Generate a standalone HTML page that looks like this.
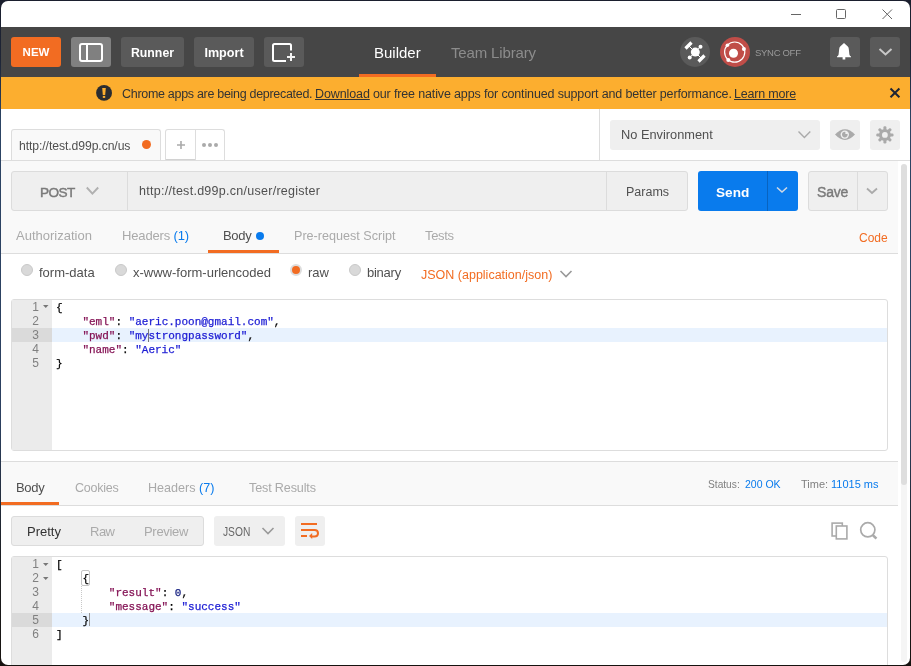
<!DOCTYPE html>
<html><head><meta charset="utf-8">
<style>
*{box-sizing:border-box;margin:0;padding:0}
html,body{width:911px;height:666px;overflow:hidden;background:linear-gradient(#1b1f2e 0,#1e2536 60px,#2c4464 120px,#2c4060 420px,#1c1e22 560px,#16120f 666px);font-family:"Liberation Sans",sans-serif}
.a{position:absolute}
#win{position:absolute;left:0;top:0;width:911px;height:666px;clip-path:inset(1px round 7px);background:#fff;-webkit-font-smoothing:antialiased;will-change:transform}
.t{position:absolute;white-space:pre;line-height:1}
.btn{position:absolute;border-radius:3px;background:#5a5a5a}
.hl{position:absolute;background:#dcdcdc}
.mono{font-family:"Liberation Mono",monospace;font-size:11px;line-height:14px;white-space:pre;position:absolute;-webkit-text-stroke:0.25px currentColor}
.k{color:#851456}.s{color:#1c1cd4}.n{color:#152080}.p{color:#000}
.ln{position:absolute;font-family:"Liberation Sans",sans-serif;font-size:12px;line-height:14px;color:#808080;text-align:right;width:26px}
</style></head><body>
<div id="win">
  <!-- title bar (win coords offset by 1px) -->
  <div class="a" style="left:0px;top:0px;width:911px;height:26px;background:#fff"></div>
  <div class="a" style="left:791px;top:14px;width:10px;height:1px;background:#666"></div>
  <div class="a" style="left:836px;top:9px;width:10px;height:10px;border:1px solid #666;border-radius:1.5px"></div>
  <svg class="a" style="left:881px;top:8px" width="12" height="12" viewBox="0 0 12 12"><path d="M1.5 1.5L11 11M11 1.5L1.5 11" stroke="#666" stroke-width="1"/></svg>

  <!-- header -->
  <div class="a" style="left:0px;top:27px;width:911px;height:50px;background:#464646"></div>
  <div class="btn" style="left:11px;top:37px;width:50px;height:30px;background:#f26c22"></div>
  <div class="t" style="left:11px;top:47px;width:50px;text-align:center;color:#fff;font-weight:700;font-size:11.5px">NEW</div>
  <div class="btn" style="left:71px;top:37px;width:40px;height:30px;background:#808080"></div>
  <div class="a" style="left:79px;top:43px;width:24px;height:19px;border:2px solid #fff;border-radius:3px"></div>
  <div class="a" style="left:86px;top:44px;width:2px;height:17px;background:#fff"></div>
  <div class="btn" style="left:121px;top:37px;width:63px;height:30px"></div>
  <div class="t" style="left:121px;top:47px;width:63px;text-align:center;color:#fff;font-weight:700;font-size:12.3px">Runner</div>
  <div class="btn" style="left:194px;top:37px;width:60px;height:30px"></div>
  <div class="t" style="left:194px;top:47px;width:60px;text-align:center;color:#fff;font-weight:700;font-size:12.6px">Import</div>
  <div class="btn" style="left:264px;top:37px;width:40px;height:30px"></div>
  <svg class="a" style="left:264px;top:37px" width="40" height="30" viewBox="0 0 40 30"><path d="M27 13.5V8.5Q27 7 25.5 7H10.5Q9 7 9 8.5V22.5Q9 24 10.5 24H22" fill="none" stroke="#fff" stroke-width="2"/><path d="M27 16V24M23 20H31" stroke="#f4f4f4" stroke-width="2"/></svg>

  <div class="t" style="left:374px;top:45px;color:#fff;font-size:15px">Builder</div>
  <div class="a" style="left:359px;top:74px;width:77px;height:3px;background:#f26c22"></div>
  <div class="t" style="left:451px;top:45px;color:#8c8c8c;font-size:15px;letter-spacing:-0.15px">Team Library</div>

  <svg class="a" style="left:680px;top:37px" width="30" height="30" viewBox="0 0 30 30">
    <circle cx="15" cy="15" r="15" fill="#5a5a5a"/>
    <path d="M9 9L21 21M20.5 9.7L9.7 20.5" stroke="#fff" stroke-width="1"/>
    <circle cx="15.3" cy="15.1" r="4.5" fill="#fff"/>
    <circle cx="20.5" cy="9.7" r="2" fill="#fff"/>
    <circle cx="9.7" cy="20.5" r="2" fill="#fff"/>
    <path d="M5.5 11.5L11.5 5.5M18.5 24.5L24.5 18.5" stroke="#fff" stroke-width="3.2"/>
  </svg>
  <svg class="a" style="left:720px;top:37px" width="30" height="30" viewBox="0 0 30 30">
    <circle cx="15" cy="15" r="15" fill="#c04d48"/>
    <circle cx="14.7" cy="15.1" r="10.1" fill="none" stroke="#fff" stroke-width="1.2"/>
    <circle cx="13.5" cy="16.2" r="4.5" fill="#fff"/>
    <circle cx="7.4" cy="8.3" r="1.8" fill="#fff"/>
    <circle cx="23.9" cy="11.9" r="2" fill="#fff"/>
    <circle cx="8.3" cy="23" r="2" fill="#fff"/>
  </svg>
  <div class="t" style="left:755px;top:48px;color:#9a9a9a;font-size:9.5px;letter-spacing:-0.3px">SYNC OFF</div>
  <div class="btn" style="left:830px;top:37px;width:30px;height:30px"></div>
  <svg class="a" style="left:830px;top:37px" width="30" height="30" viewBox="0 0 30 30"><path d="M14 6L10.2 9.6Q9.3 10.6 9.2 12L8.6 17.6Q8.3 19 7 19.6V20.2H21V19.6Q19.7 19 19.4 17.6L18.8 12Q18.7 10.6 17.8 9.6Z" fill="#fff"/><rect x="12.6" y="19.5" width="2.7" height="3" fill="#fff"/></svg>
  <div class="btn" style="left:870px;top:37px;width:30px;height:30px"></div>
  <svg class="a" style="left:870px;top:37px" width="30" height="30" viewBox="0 0 30 30"><path d="M9.5 12L15.5 17.5L21.5 12" fill="none" stroke="#c8c8c8" stroke-width="2"/></svg>

  <!-- banner -->
  <div class="a" style="left:0px;top:77px;width:911px;height:32px;background:#fcae2f"></div>
  <div class="t" style="left:122px;top:88px;color:#333;font-size:12.5px;letter-spacing:-0.3px">Chrome apps are being deprecated.</div>
  <div class="t" style="left:315px;top:88px;color:#333;font-size:12.5px;letter-spacing:-0.1px"><u>Download</u></div>
  <div class="t" style="left:373px;top:88px;color:#333;font-size:12.5px;letter-spacing:-0.145px">our free native apps for continued support and better performance.</div>
  <div class="t" style="left:734px;top:88px;color:#333;font-size:12.5px;letter-spacing:-0.2px"><u>Learn more</u></div>

  <svg class="a" style="left:94px;top:83px" width="20" height="20" viewBox="0 0 20 20"><circle cx="10.05" cy="9.9" r="7.95" fill="#2a2c30"/><path d="M8.2 5H11.8L11.2 12H8.8Z" fill="#fcae2f"/><rect x="8.8" y="12.9" width="2.4" height="2" fill="#fcae2f"/></svg>
  <svg class="a" style="left:884px;top:83px" width="20" height="20" viewBox="0 0 20 20"><path d="M6.5 5.5L15.4 14.3M15.4 5.5L6.5 14.3" stroke="#1e2433" stroke-width="2"/></svg>

  <!-- top tabs row -->
  <div class="a" style="left:0px;top:109px;width:911px;height:51px;background:#fff"></div>
  <div class="a" style="left:11px;top:129px;width:150px;height:32px;background:#f9f9f9;border:1px solid #ddd;border-bottom:none;border-radius:3px 3px 0 0"></div>
  <div class="t" style="left:19px;top:140px;color:#505050;font-size:12.2px;letter-spacing:-0.08px">http://test.d99p.cn/us</div>
  <div class="a" style="left:142px;top:140px;width:9px;height:9px;border-radius:50%;background:#f26c22"></div>
  <div class="a" style="left:165px;top:129px;width:60px;height:32px;background:#fff;border:1px solid #ddd;border-bottom:none;border-radius:3px 3px 0 0"></div>
  <div class="a" style="left:195px;top:130px;width:1px;height:30px;background:#ddd"></div>
  <div class="a" style="left:166px;top:159px;width:29px;height:1px;background:#d2d2d2"></div>
  <div class="a" style="left:599px;top:109px;width:1px;height:51px;background:#ddd"></div>
  <div class="a" style="left:610px;top:120px;width:210px;height:30px;background:#efefef;border-radius:3px"></div>
  <div class="t" style="left:621px;top:129px;color:#505050;font-size:12.8px">No Environment</div>
  <div class="btn" style="left:830px;top:120px;width:30px;height:30px;background:#efefef"></div>
  <div class="btn" style="left:870px;top:120px;width:30px;height:30px;background:#efefef"></div>
  <svg class="a" style="left:165px;top:130px" width="60" height="30" viewBox="0 0 60 30"><path d="M16 11V19M12 15H20" stroke="#aaa" stroke-width="1.6"/><circle cx="39" cy="15" r="2" fill="#aaa"/><circle cx="45" cy="15" r="2" fill="#aaa"/><circle cx="51" cy="15" r="2" fill="#aaa"/></svg>
  <svg class="a" style="left:795px;top:128px" width="18" height="14" viewBox="0 0 18 14"><path d="M3.5 3.5L9.4 9.5L15.3 3.5" fill="none" stroke="#aaa" stroke-width="1.4"/></svg>
  <svg class="a" style="left:830px;top:120px" width="30" height="30" viewBox="0 0 30 30"><path d="M5 14.6Q15 4 25 14.6Q15 25.2 5 14.6Z" fill="#aaa"/><circle cx="14.8" cy="14.6" r="4.2" fill="#efefef"/><circle cx="14.8" cy="14.6" r="2.8" fill="#aaa"/><path d="M15.4 14V11.3A3.3 3.3 0 0 1 18.2 14Z" fill="#efefef"/></svg>
  <svg class="a" style="left:870px;top:120px" width="30" height="30" viewBox="0 0 30 30"><g transform="translate(14.9 14.9)" fill="#aaa"><circle r="6"/><rect x="-1.5" y="-8.6" width="3" height="4" rx="1.2" transform="rotate(0)"/><rect x="-1.5" y="-8.6" width="3" height="4" rx="1.2" transform="rotate(45)"/><rect x="-1.5" y="-8.6" width="3" height="4" rx="1.2" transform="rotate(90)"/><rect x="-1.5" y="-8.6" width="3" height="4" rx="1.2" transform="rotate(135)"/><rect x="-1.5" y="-8.6" width="3" height="4" rx="1.2" transform="rotate(180)"/><rect x="-1.5" y="-8.6" width="3" height="4" rx="1.2" transform="rotate(225)"/><rect x="-1.5" y="-8.6" width="3" height="4" rx="1.2" transform="rotate(270)"/><rect x="-1.5" y="-8.6" width="3" height="4" rx="1.2" transform="rotate(315)"/></g><circle cx="14.9" cy="14.9" r="2.9" fill="#efefef"/></svg>

  <!-- request area -->
  <div class="a" style="left:0px;top:160px;width:911px;height:1px;background:#ddd"></div>
  <div class="a" style="left:0px;top:161px;width:898px;height:93px;background:#f9f9f9"></div>

  <!-- url bar -->
  <div class="a" style="left:11px;top:171px;width:677px;height:40px;background:#efefef;border:1px solid #dcdcdc;border-radius:3px"></div>
  <div class="a" style="left:127px;top:172px;width:1px;height:38px;background:#dcdcdc"></div>
  <div class="a" style="left:606px;top:172px;width:1px;height:38px;background:#dcdcdc"></div>
  <div class="t" style="left:40px;top:186px;color:#7a7a7a;font-weight:400;font-size:13.6px;letter-spacing:-0.6px;-webkit-text-stroke:0.45px #7a7a7a">POST</div>
  <svg class="a" style="left:85px;top:186px" width="15" height="10" viewBox="0 0 15 10"><path d="M1.8 1.5L7.4 7.6L13.2 1.5" fill="none" stroke="#b0b0b0" stroke-width="1.9"/></svg>
  <div class="t" style="left:139px;top:185px;color:#505050;font-size:12.5px;letter-spacing:0.27px">http://test.d99p.cn/user/register</div>
  <div class="t" style="left:626px;top:186px;color:#505050;font-size:12.5px">Params</div>
  <div class="btn" style="left:698px;top:171px;width:100px;height:40px;background:#097bed"></div>
  <div class="a" style="left:767px;top:171px;width:1px;height:40px;background:#0863c0"></div>
  <div class="t" style="left:716px;top:186px;color:#fff;font-weight:700;font-size:13.6px">Send</div>
  <svg class="a" style="left:775px;top:185px" width="14" height="10" viewBox="0 0 14 10"><path d="M2 2.5L7 7L12 2.5" fill="none" stroke="#cfd9e6" stroke-width="1.6"/></svg>
  <div class="a" style="left:808px;top:171px;width:80px;height:40px;background:#efefef;border:1px solid #dcdcdc;border-radius:3px"></div>
  <div class="a" style="left:857px;top:172px;width:1px;height:38px;background:#dcdcdc"></div>
  <div class="t" style="left:817px;top:185px;color:#7a7a7a;font-weight:400;font-size:14px;letter-spacing:-0.2px;-webkit-text-stroke:0.4px #7a7a7a">Save</div>
  <svg class="a" style="left:865px;top:186px" width="14" height="10" viewBox="0 0 14 10"><path d="M2 2.5L7 7L12 2.5" fill="none" stroke="#aaa" stroke-width="1.8"/></svg>

  <!-- request tabs -->
  <div class="t" style="left:16px;top:229px;color:#aaa;font-size:13px">Authorization</div>
  <div class="t" style="left:122px;top:229px;color:#aaa;font-size:13px;letter-spacing:-0.15px">Headers <span style="color:#097bed">(1)</span></div>
  <div class="t" style="left:223px;top:229px;color:#505050;font-size:13px;letter-spacing:-0.3px">Body</div>
  <div class="a" style="left:256px;top:232px;width:8px;height:8px;border-radius:50%;background:#097bed"></div>
  <div class="a" style="left:208px;top:250px;width:71px;height:3px;background:#f26c22"></div>
  <div class="t" style="left:294px;top:230px;color:#aaa;font-size:12.6px">Pre-request Script</div>
  <div class="t" style="left:425px;top:229px;color:#aaa;font-size:13px;letter-spacing:-0.35px">Tests</div>
  <div class="t" style="left:859px;top:232px;color:#f26c22;font-size:12px">Code</div>
  <div class="a" style="left:0px;top:253px;width:898px;height:1px;background:#ddd"></div>

  <!-- body type radios -->
  <div class="a" style="left:21px;top:264px;width:12px;height:12px;border-radius:50%;background:#d9d9d9;border:1px solid #c9c9c9"></div>
  <div class="t" style="left:39px;top:266px;color:#505050;font-size:13px">form-data</div>
  <div class="a" style="left:115px;top:264px;width:12px;height:12px;border-radius:50%;background:#d9d9d9;border:1px solid #c9c9c9"></div>
  <div class="t" style="left:133px;top:266px;color:#505050;font-size:13px">x-www-form-urlencoded</div>
  <div class="a" style="left:290px;top:264px;width:12px;height:12px;border-radius:50%;background:#f26c22;border:2px solid #ddd"></div>
  <div class="t" style="left:308px;top:266px;color:#505050;font-size:13px">raw</div>
  <div class="a" style="left:349px;top:264px;width:12px;height:12px;border-radius:50%;background:#d9d9d9;border:1px solid #c9c9c9"></div>
  <div class="t" style="left:367px;top:266px;color:#505050;font-size:13px;letter-spacing:-0.25px">binary</div>
  <div class="t" style="left:421px;top:269px;color:#f26c22;font-size:12.5px">JSON (application/json)</div>
  <svg class="a" style="left:559px;top:269px" width="14" height="10" viewBox="0 0 14 10"><path d="M1.5 2L7 7.5L12.5 2" fill="none" stroke="#999" stroke-width="1.6"/></svg>

  <!-- request editor -->
  <div class="a" style="left:11px;top:299px;width:877px;height:152px;border:1px solid #ddd;border-radius:3px;background:#fff"></div>
  <div class="a" style="left:12px;top:300px;width:40px;height:150px;background:#ebebeb"></div>
  <div class="a" style="left:12px;top:328px;width:40px;height:14px;background:#dadada"></div>
  <div class="a" style="left:52px;top:328px;width:835px;height:14px;background:#e8f2fe"></div>
  <div class="ln" style="left:13px;top:300px">1<br>2<br>3<br>4<br>5</div>
  <svg class="a" style="left:43px;top:305px" width="6" height="4" viewBox="0 0 6 4"><path d="M0 0H5.5L2.75 3Z" fill="#777"/></svg>
  <div class="mono" style="left:56px;top:301px"><span class="p">{</span>
    <span class="k">"eml"</span>: <span class="s">"aeric.poon@gmail.com"</span>,
    <span class="k">"pwd"</span>: <span class="s">"mystrongpassword"</span>,
    <span class="k">"name"</span>: <span class="s">"Aeric"</span>
<span class="p">}</span></div>
  <div class="a" style="left:148px;top:329px;width:1px;height:13px;background:#777"></div>

  <!-- response -->
  <div class="a" style="left:0px;top:461px;width:898px;height:1px;background:#ddd"></div>
  <div class="a" style="left:0px;top:462px;width:898px;height:43px;background:#f9f9f9"></div>
  <div class="t" style="left:16px;top:481px;color:#505050;font-size:13px;letter-spacing:-0.3px">Body</div>
  <div class="a" style="left:0px;top:502px;width:59px;height:3px;background:#f26c22"></div>
  <div class="t" style="left:75px;top:482px;color:#aaa;font-size:12.5px;letter-spacing:-0.25px">Cookies</div>
  <div class="t" style="left:148px;top:482px;color:#aaa;font-size:12.6px">Headers <span style="color:#097bed">(7)</span></div>
  <div class="t" style="left:249px;top:482px;color:#aaa;font-size:12.6px;letter-spacing:-0.15px">Test Results</div>
  <div class="t" style="left:708px;top:480px;color:#808080;font-size:10.2px">Status:</div>
  <div class="t" style="left:745px;top:479px;color:#097bed;font-size:10.5px">200 OK</div>
  <div class="t" style="left:801px;top:479px;color:#808080;font-size:11px">Time:</div>
  <div class="t" style="left:831px;top:479px;color:#097bed;font-size:11px">11015 ms</div>
  <div class="a" style="left:0px;top:505px;width:898px;height:1px;background:#ddd"></div>

  <div class="a" style="left:11px;top:516px;width:193px;height:30px;background:#efefef;border:1px solid #dcdcdc;border-radius:3px"></div>
  <div class="t" style="left:27px;top:525px;color:#333;font-size:13px">Pretty</div>
  <div class="t" style="left:90px;top:525px;color:#aaa;font-size:13px;letter-spacing:-0.5px">Raw</div>
  <div class="t" style="left:144px;top:525px;color:#aaa;font-size:13px;letter-spacing:-0.3px">Preview</div>
  <div class="btn" style="left:214px;top:516px;width:71px;height:30px;background:#efefef"></div>
  <div class="t" style="left:223px;top:526px;color:#666;font-size:12.8px;transform:scaleX(0.8);transform-origin:0 0">JSON</div>
  <svg class="a" style="left:261px;top:526px" width="14" height="10" viewBox="0 0 14 10"><path d="M1.5 2L7 7.5L12.5 2" fill="none" stroke="#999" stroke-width="1.6"/></svg>
  <div class="btn" style="left:295px;top:516px;width:30px;height:30px;background:#efefef"></div>

  <svg class="a" style="left:295px;top:516px" width="30" height="30" viewBox="0 0 30 30"><path d="M6 8H22M6 14H19.5Q23 14 23 17.3Q23 20.5 19.5 20.5H16.5M6 20H12" fill="none" stroke="#f26c22" stroke-width="2"/><path d="M14 20L17.2 17V23Z" fill="#f26c22"/></svg>
  <svg class="a" style="left:825px;top:516px" width="60" height="30" viewBox="0 0 60 30"><rect x="7.1" y="7.1" width="10.2" height="12.9" fill="none" stroke="#aaa" stroke-width="1.6"/><rect x="11.3" y="10" width="10.6" height="12.9" fill="#fff" stroke="#aaa" stroke-width="1.6"/><circle cx="42.8" cy="13.8" r="7.1" fill="none" stroke="#aaa" stroke-width="1.7"/><path d="M47.6 18.8L51.4 22.6" stroke="#aaa" stroke-width="2.6"/></svg>

  <!-- response editor -->
  <div class="a" style="left:11px;top:556px;width:877px;height:120px;border:1px solid #ddd;border-radius:3px;background:#fff"></div>
  <div class="a" style="left:12px;top:557px;width:40px;height:120px;background:#ebebeb"></div>
  <div class="a" style="left:12px;top:613px;width:40px;height:14px;background:#dadada"></div>
  <div class="a" style="left:52px;top:613px;width:835px;height:14px;background:#e8f2fe"></div>
  <div class="ln" style="left:13px;top:557px">1<br>2<br>3<br>4<br>5<br>6</div>
  <svg class="a" style="left:43px;top:562px" width="6" height="18" viewBox="0 0 6 18"><path d="M0 1H5.5L2.75 4Z M0 15H5.5L2.75 18Z" fill="#777"/></svg>
  <div class="a" style="left:81px;top:570px;width:9px;height:16px;border:1px solid #c4c4c4;border-radius:2px"></div>
  <div class="a" style="left:81px;top:586px;width:0;height:27px;border-left:1px dotted #c8c8c8"></div>
  <div class="a" style="left:89px;top:613px;width:1px;height:13px;background:#999"></div>
  <div class="mono" style="left:56px;top:558px"><span class="p">[</span>
    <span class="p">{</span>
        <span class="k">"result"</span>: <span class="n">0</span>,
        <span class="k">"message"</span>: <span class="s">"success"</span>
    <span class="p">}</span>
<span class="p">]</span></div>

  <!-- scrollbar -->
  <div class="a" style="left:898px;top:161px;width:13px;height:505px;background:#fff"></div>
  <div class="a" style="left:901px;top:470px;width:6px;height:192px;border-radius:3px;background:#f5f5f5"></div>
  <div class="a" style="left:901px;top:164px;width:6px;height:321px;border-radius:3px;background:#dedede"></div>
</div>
</body></html>
